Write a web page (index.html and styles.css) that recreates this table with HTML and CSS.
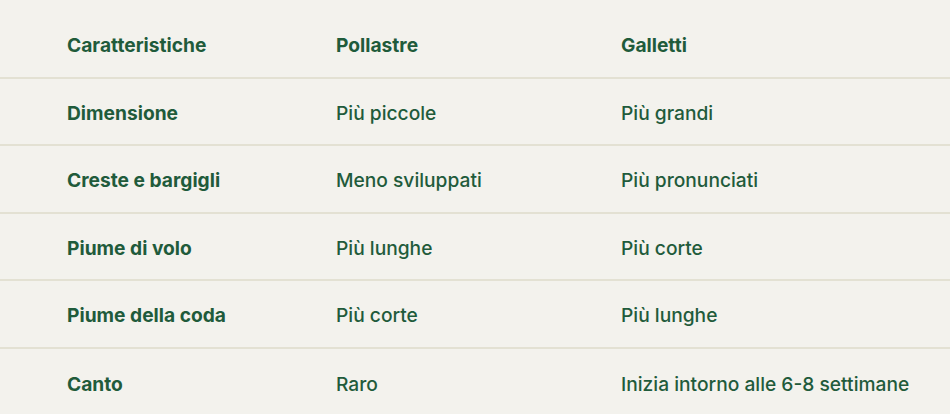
FILE: index.html
```html
<!DOCTYPE html>
<html lang="it">
<head>
<meta charset="utf-8">
<link rel="stylesheet" href="styles.css">
</head>
<body>
<div class="table">
  <div class="row head">
    <div class="cell label">Caratteristiche</div>
    <div class="cell label">Pollastre</div>
    <div class="cell label">Galletti</div>
  </div>
  <div class="row">
    <div class="cell label">Dimensione</div>
    <div class="cell">Più piccole</div>
    <div class="cell">Più grandi</div>
  </div>
  <div class="row">
    <div class="cell label">Creste e bargigli</div>
    <div class="cell">Meno sviluppati</div>
    <div class="cell">Più pronunciati</div>
  </div>
  <div class="row">
    <div class="cell label">Piume di volo</div>
    <div class="cell">Più lunghe</div>
    <div class="cell">Più corte</div>
  </div>
  <div class="row">
    <div class="cell label">Piume della coda</div>
    <div class="cell">Più corte</div>
    <div class="cell">Più lunghe</div>
  </div>
  <div class="row last">
    <div class="cell label">Canto</div>
    <div class="cell">Raro</div>
    <div class="cell">Inizia intorno alle 6-8 settimane</div>
  </div>
</div>
</body>
</html>
```
FILE: styles.css
```css
html, body {
  margin: 0;
  padding: 0;
  background: #f3f2ed;
}
body {
  font-family: "Inter", "Open Sans", sans-serif;
  color: #1f5b3b;
  font-size: 19.2px;
  font-weight: 500;
  overflow: hidden;
}
.table {
  padding-top: 11px;
}
.row {
  display: grid;
  grid-template-columns: 336px 285px 1fr;
  height: 67.5px;
  align-items: center;
  border-bottom: 2px solid #e3e1d3;
  box-sizing: border-box;
  padding-top: 3px;
}
.row.last {
  border-bottom: none;
}
.cell:first-child {
  padding-left: 67px;
}
.label {
  font-weight: 700;
}
```
